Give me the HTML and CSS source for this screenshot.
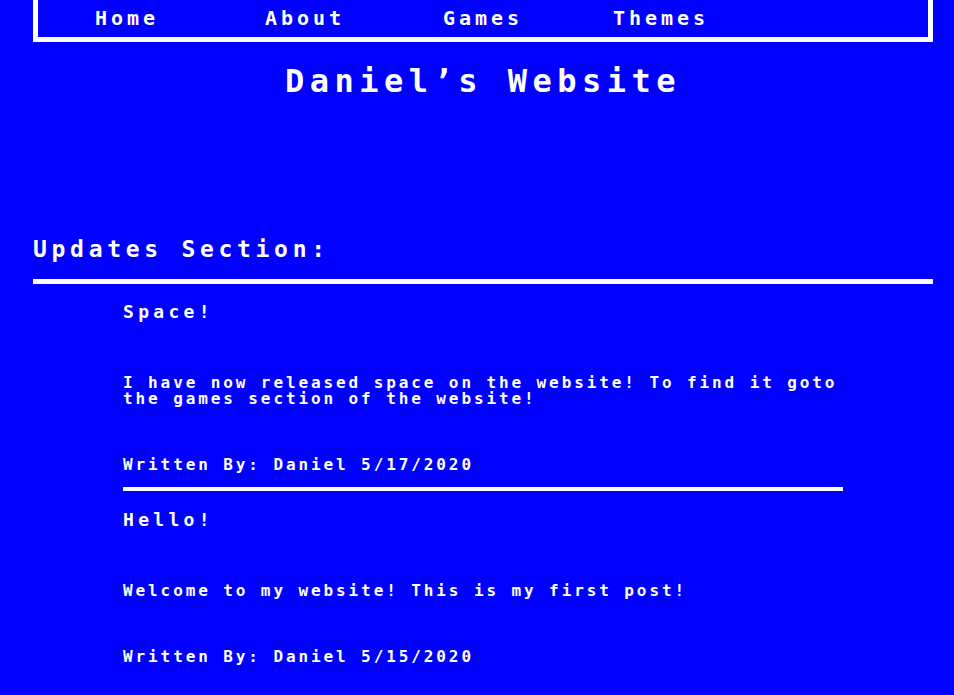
FILE: index.html
```html
<!DOCTYPE html>
<html lang="en">
<head>
<meta charset="utf-8">
<title>Daniel's Website</title>
<link rel="stylesheet" href="styles.css">
</head>
<body>
<div class="page">
  <nav class="nav">
    <ul class="nav-list">
      <li class="nav-item"><a href="#">Home</a></li>
      <li class="nav-item"><a href="#">About</a></li>
      <li class="nav-item"><a href="#">Games</a></li>
      <li class="nav-item"><a href="#">Themes</a></li>
    </ul>
  </nav>
  <h1 class="site-title">Daniel’s Website</h1>
  <h2 class="section-title">Updates Section:</h2>
  <hr class="section-rule">
  <div class="posts">
    <article class="post">
      <h3 class="post-title">Space!</h3>
      <p class="post-body">I have now released space on the website! To find it goto the games section of the website!</p>
      <p class="post-meta">Written By: Daniel 5/17/2020</p>
    </article>
    <hr class="post-rule">
    <article class="post">
      <h3 class="post-title">Hello!</h3>
      <p class="post-body">Welcome to my website! This is my first post!</p>
      <p class="post-meta">Written By: Daniel 5/15/2020</p>
    </article>
  </div>
</div>
</body>
</html>
```
FILE: styles.css
```css
html, body {
  margin: 0;
  padding: 0;
  background: #0000ff;
  color: #ffffff;
  font-family: "DejaVu Sans Mono", "Liberation Mono", monospace;
  font-weight: bold;
}

.page {
  width: 900px;
  margin-left: 33px;
  padding-bottom: 40px;
}

.nav {
  border: 5px solid #ffffff;
  border-top: none;
}

.nav-list {
  list-style: none;
  margin: 0;
  padding: 0;
  display: grid;
  grid-template-columns: repeat(5, 1fr);
  height: 37px;
}

.nav-item {
  text-align: center;
  font-size: 20px;
  line-height: 37px;
  letter-spacing: 4px;
}

.nav-item a {
  color: #ffffff;
  text-decoration: none;
}

.site-title {
  margin: 19px 0 0 0;
  text-align: center;
  font-size: 32px;
  line-height: 40px;
  letter-spacing: 5.5px;
  font-weight: bold;
}

.section-title {
  margin: 134px 0 0 0;
  font-size: 23px;
  line-height: 28px;
  letter-spacing: 4.7px;
  font-weight: bold;
}

.section-rule {
  margin: 16px 0 0 0;
  border: none;
  height: 5px;
  background: #ffffff;
}

.posts {
  width: 720px;
  margin: 17px auto 0 auto;
  display: flex;
  flex-direction: column;
}

.post {
  display: flex;
  flex-direction: column;
}

.post-title {
  margin: 0;
  font-size: 18px;
  line-height: 22px;
  letter-spacing: 4.3px;
  font-weight: bold;
}

.post-body {
  margin: 52px 0 0 0;
  font-size: 16px;
  line-height: 16px;
  letter-spacing: 2.9px;
}

.post-meta {
  margin: 50px 0 0 0;
  font-size: 16px;
  line-height: 16px;
  letter-spacing: 2.9px;
}

.post-rule {
  margin: 14px 0 18px 0;
  border: none;
  height: 4px;
  background: #ffffff;
}
```
